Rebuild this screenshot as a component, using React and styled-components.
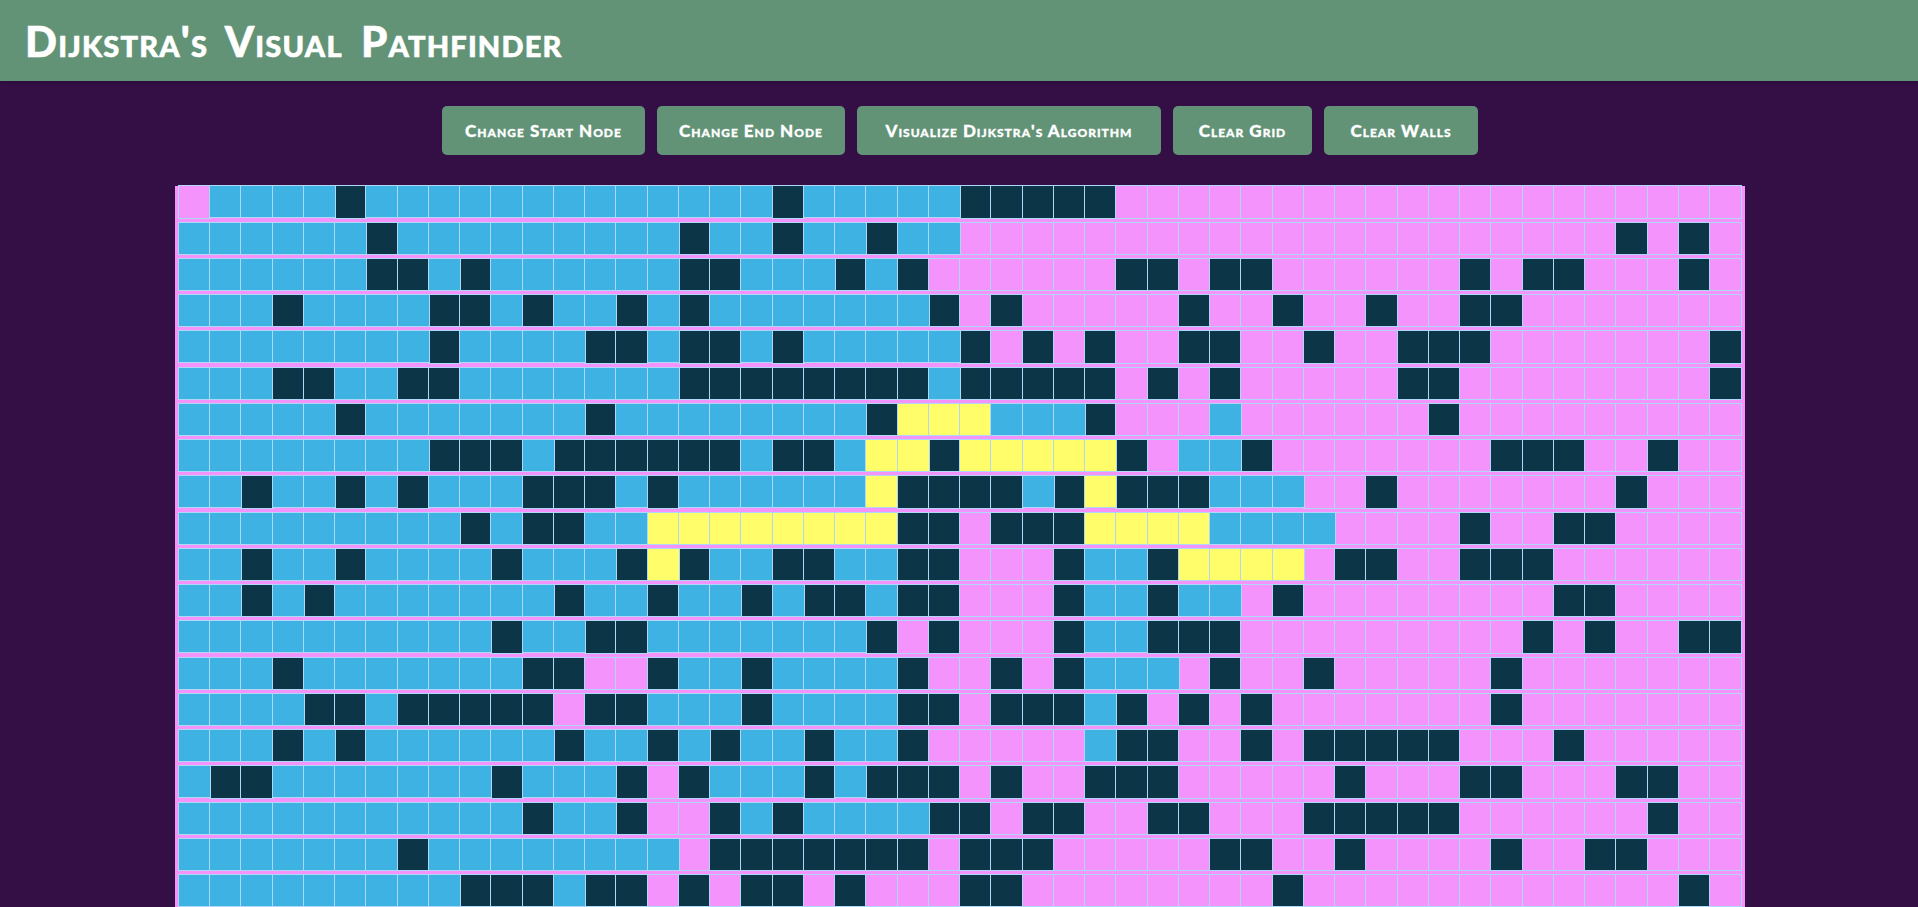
import React from "react";
import styled, { createGlobalStyle } from "styled-components";

const Global = createGlobalStyle`
  html, body { margin: 0; padding: 0; height: 100%; overflow: hidden; background: #330f45; }
`;

const Page = styled.div`
  width: 1920px;
  height: 100vh;
  overflow: hidden;
  background: #330f45;
  font-family: "Lato", "Liberation Sans", sans-serif;
`;

const Header = styled.header`
  height: 81px;
  background: #629377;
  box-shadow: 0 1px 3px rgba(0, 0, 0, 0.25);
  display: flex;
  align-items: center;
  padding-left: 25px;
  box-sizing: border-box;
`;

const Title = styled.h1`
  margin: 0;
  color: #fff;
  font-size: 42px;
  line-height: 1;
  font-weight: 900;
  font-variant: small-caps;
  letter-spacing: 1.2px;
  word-spacing: 7px;
  -webkit-text-stroke: 0.6px #fff;
`;

const Toolbar = styled.nav`
  display: flex;
  justify-content: center;
  gap: 12px;
  padding-top: 25px;
`;

const ActionButton = styled.button`
  width: ${(p) => p.$w}px;
  height: 49px;
  padding: 0;
  border: none;
  border-radius: 5px;
  background: #629377;
  color: #fff;
  font-family: inherit;
  font-size: 17px;
  font-weight: 900;
  font-variant: small-caps;
  letter-spacing: 1px;
  -webkit-text-stroke: 0.3px #fff;
`;

const Board = styled.div`
  width: 1562.5px;
  margin: 31.3px auto 0;
  padding: 0 3.75px;
  background: #f393fb;
`;

const Row = styled.div`
  display: flex;
  height: 36.25px;
`;

const colors = { b: "#3eb2e3", p: "#f393fb", w: "#0c3547", y: "#fffe6a" };

const Cell = styled.div`
  flex: none;
  width: 31.25px;
  height: 31.25px;
  outline: 1px solid rgb(175, 216, 248);
  background: ${(p) => colors[p.$k]};
  ${(p) => (p.$k === "b" || p.$k === "y" ? "will-change: transform;" : "")}
`;

const buttons = [
  ["Change Start Node", 203],
  ["Change End Node", 188],
  ["Visualize Dijkstra's Algorithm", 304],
  ["Clear Grid", 139],
  ["Clear Walls", 154],
];

const grid = [
  "1p4b1w13b1w5b5w20p",
  "6b1w9b1w2b1w2b1w2b21p1w1p1w1p",
  "6b2w1b1w6b2w3b1w1b1w6p2w1p2w6p1w1p2w3p1w1p",
  "3b1w4b2w1b1w2b1w1b1w7b1w1p1w5p1w2p1w2p1w2p2w7p",
  "8b1w4b2w1b2w1b1w5b1w1p1w1p1w2p2w2p1w2p3w7p1w",
  "3b2w2b2w7b8w1b5w1p1w1p1w5p2w8p1w",
  "5b1w7b1w8b1w3y3b1w3p1b6p1w9p",
  "8b3w1b6w1b2w1b2y1w5y1w1p2b1w7p3w2p1w2p",
  "2b1w2b1w1b1w3b3w1b1w6b1y4w1b1w1y3w3b2p1w7p1w3p",
  "9b1w1b2w2b8y2w1p3w4y4b4p1w2p2w4p",
  "2b1w2b1w4b1w3b1w1y1w2b2w2b2w3p1w2b1w4y1p2w2p3w6p",
  "2b1w1b1w7b1w2b1w2b1w1b2w1b2w3p1w2b1w2b1p1w8p2w4p",
  "10b1w2b2w7b1w1p1w3p1w2b3w9p1w1p1w2p2w",
  "3b1w7b2w2p1w2b1w4b1w2p1w1p1w3b1p1w2p1w5p1w7p",
  "4b2w1b5w1p2w3b1w4b2w1p3w1b1w1p1w1p1w7p1w7p",
  "3b1w1b1w6b1w2b1w1b1w2b1w2b1w5p1b2w2p1w1p5w3p1w5p",
  "1b2w7b1w3b1w1p1w3b1w1b3w1p1w2p3w5p1w3p2w3p2w2p",
  "11b1w2b1w2p1w1b1w4b2w1p2w2p2w3p5w6p1w2p",
  "7b1w8b1p7w1p3w5p2w2p1w4p1w2p2w3p",
  "9b3w1b2w1p1w1p2w1p1w3p2w8p1w12p1w1p",
];

const expand = (s) =>
  [...s.matchAll(/(\d+)([bpwy])/g)].flatMap((m) => Array(Number(m[1])).fill(m[2]));

export default function App() {
  return (
    <Page>
      <Global />
      <Header>
        <Title>Dijkstra's Visual Pathfinder</Title>
      </Header>
      <Toolbar>
        {buttons.map(([label, w]) => (
          <ActionButton key={label} $w={w}>
            {label}
          </ActionButton>
        ))}
      </Toolbar>
      <Board>
        {grid.map((row, r) => (
          <Row key={r}>
            {expand(row).map((k, c) => (
              <Cell key={c} $k={k} />
            ))}
          </Row>
        ))}
      </Board>
    </Page>
  );
}
